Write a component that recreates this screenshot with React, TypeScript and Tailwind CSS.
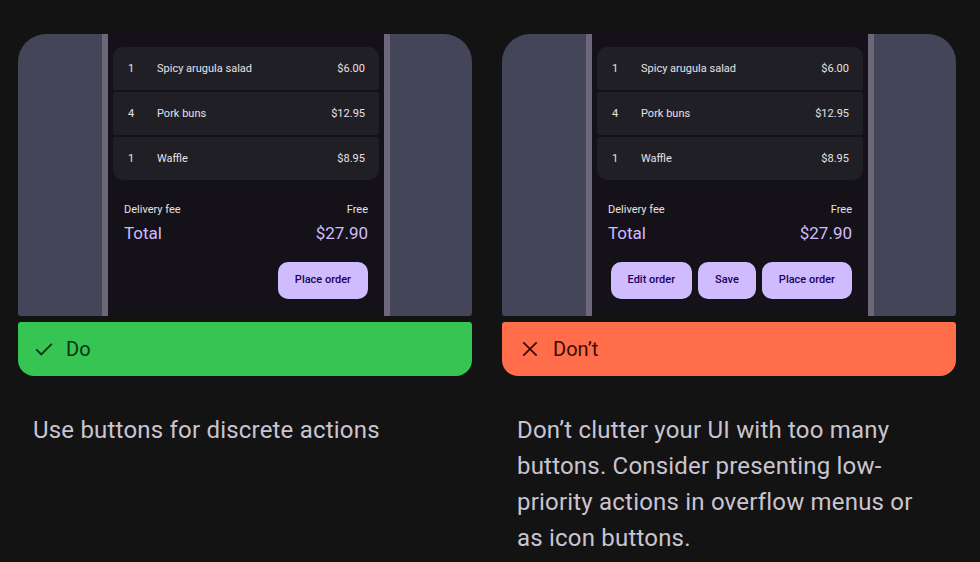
import React from "react";

const items = [
  { q: "1", n: "Spicy arugula salad", p: "$6.00" },
  { q: "4", n: "Pork buns", p: "$12.95" },
  { q: "1", n: "Waffle", p: "$8.95" },
];

function Phone({ buttons }: { buttons: string[] }) {
  return (
    <div className="flex h-[282px] w-full overflow-hidden rounded-t-[28px] rounded-b-[3px] bg-[#45455a]">
      <div className="w-[84px] shrink-0" />
      <div className="w-[6px] shrink-0 bg-[#6c687a]" />
      <div className="flex w-[276px] shrink-0 flex-col bg-[#141218] px-[5px] pt-[13px]">
        <div className="flex flex-col gap-[2px]">
          {items.map((it, i) => (
            <div
              key={i}
              className={
                "flex h-[43px] items-center bg-[#211f26] pl-[15px] pr-[14px] pt-[1px] text-[11px] text-[#e6e1e5] " +
                (i === 0 ? "rounded-t-[10px] rounded-b-[3px]" : i === 2 ? "rounded-b-[10px] rounded-t-[3px]" : "rounded-[3px]")
              }
            >
              <span className="w-[29px]">{it.q}</span>
              <span className="flex-1">{it.n}</span>
              <span>{it.p}</span>
            </div>
          ))}
        </div>
        <div className="mt-[22px] flex flex-col px-[11px]">
          <div className="flex justify-between text-[11px] leading-[16px] text-[#e6e1e5]">
            <span>Delivery fee</span>
            <span>Free</span>
          </div>
          <div className="mt-[3px] flex justify-between text-[17px] leading-[24px] text-[#cfbcff]">
            <span>Total</span>
            <span>$27.90</span>
          </div>
          <div className="mt-[17px] flex justify-end gap-[6px]">
            {buttons.map((b) => (
              <div
                key={b}
                className="flex h-[37px] shrink-0 items-center whitespace-nowrap rounded-[10px] bg-[#cfbcff] px-[17px] text-[11px] font-medium text-[#21005d]"
              >
                {b}
              </div>
            ))}
          </div>
        </div>
      </div>
      <div className="w-[6px] shrink-0 bg-[#6c687a]" />
      <div className="flex-1" />
    </div>
  );
}

function Check() {
  return (
    <svg width="22" height="22" viewBox="0 0 24 24" fill="none" stroke="currentColor" strokeWidth="2">
      <path d="M3.5 12.5l5.5 5.5L20.5 6.5" />
    </svg>
  );
}

function Cross() {
  return (
    <svg width="20" height="20" viewBox="0 0 24 24" fill="none" stroke="currentColor" strokeWidth="2.2">
      <path d="M4 4l16 16M20 4L4 20" />
    </svg>
  );
}

export default function App() {
  return (
    <div
      className="h-[562px] w-[980px] overflow-hidden bg-[#131313] pl-[18px] pt-[34px]"
      style={{ fontFamily: "Roboto, 'Noto Sans', sans-serif" }}
    >
      <div className="flex gap-[30px]">
        <div className="flex w-[454px] flex-col">
          <Phone buttons={["Place order"]} />
          <div className="mt-[6px] flex h-[54px] items-center gap-[11px] rounded-t-[3px] rounded-b-[16px] bg-[#36c452] pl-[15px] text-[20px] text-[#0b3315]">
            <Check />
            <span>Do</span>
          </div>
          <p className="mt-[36px] px-[15px] text-[24px] leading-[36px] tracking-[0.2px] text-[#cac4d0]">
            Use buttons for discrete actions
          </p>
        </div>
        <div className="flex w-[454px] flex-col">
          <Phone buttons={["Edit order", "Save", "Place order"]} />
          <div className="mt-[6px] flex h-[54px] items-center gap-[13px] rounded-t-[3px] rounded-b-[16px] bg-[#ff6d4b] pl-[18px] text-[20px] text-[#3d0a02]">
            <Cross />
            <span>Don’t</span>
          </div>
          <p className="mt-[36px] whitespace-nowrap px-[15px] text-[24px] leading-[36px] tracking-[0.2px] text-[#cac4d0]">
            Don’t clutter your UI with too many
            <br />
            buttons. Consider presenting low-
            <br />
            priority actions in overflow menus or
            <br />
            as icon buttons.
          </p>
        </div>
      </div>
    </div>
  );
}
